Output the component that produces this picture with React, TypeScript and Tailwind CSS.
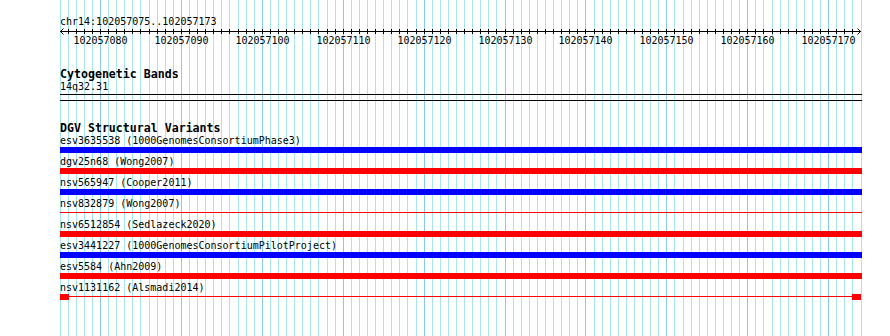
const START = 102057075;
const BASES = 99;
const LEFT = 60;
const TRACK_W = 801;

// pixel column of the gridline at base offset i
const bx = (i: number) => Math.floor(LEFT + (i * TRACK_W) / BASES);

type Variant = {
  name: string;
  study: string;
  color: 'blue' | 'red';
  style: 'bar' | 'line' | 'ends';
};

const variants: Variant[] = [
  { name: 'esv3635538', study: '1000GenomesConsortiumPhase3', color: 'blue', style: 'bar' },
  { name: 'dgv25n68', study: 'Wong2007', color: 'red', style: 'bar' },
  { name: 'nsv565947', study: 'Cooper2011', color: 'blue', style: 'bar' },
  { name: 'nsv832879', study: 'Wong2007', color: 'red', style: 'line' },
  { name: 'nsv6512854', study: 'Sedlazeck2020', color: 'red', style: 'bar' },
  { name: 'esv3441227', study: '1000GenomesConsortiumPilotProject', color: 'blue', style: 'bar' },
  { name: 'esv5584', study: 'Ahn2009', color: 'red', style: 'bar' },
  { name: 'nsv1131162', study: 'Alsmadi2014', color: 'red', style: 'ends' },
];

function Grid() {
  return (
    <svg className="absolute left-0 top-0" width={890} height={336} shapeRendering="crispEdges">
      {Array.from({ length: BASES + 1 }, (_, i) => (
        <rect
          key={i}
          x={bx(i)}
          y={0}
          width={1}
          height={336}
          fill={i % 10 === 5 ? '#87cbef' : '#a8e6ef'}
        />
      ))}
    </svg>
  );
}

function Ruler() {
  const ticks = Array.from({ length: BASES - 1 }, (_, k) => k + 1);
  const labels = Array.from({ length: 10 }, (_, k) => 5 + k * 10);
  return (
    <svg width={803} height={18} className="block">
      <g shapeRendering="crispEdges">
        <rect x={0} y={3} width={801} height={1} fill="#000" />
        {ticks.map((i) => (
          <rect key={i} x={bx(i) - LEFT} y={1} width={1} height={5} fill="#000" />
        ))}
      </g>
      {/* arrowheads */}
      <polyline points="3.5,0.5 0.5,3.5 3.5,6.5" fill="none" stroke="#000" strokeWidth={1} />
      <polyline points="797.5,0.5 800.5,3.5 797.5,6.5" fill="none" stroke="#000" strokeWidth={1} />
      {labels.map((i) => (
        <text
          key={i}
          x={bx(i) - LEFT + 0.5}
          y={15.5}
          textAnchor="middle"
          fontSize={10}
          fontFamily="'DejaVu Sans Mono', monospace"
          fill="#000"
        >
          {START + i}
        </text>
      ))}
    </svg>
  );
}

function VariantGlyph({ v }: { v: Variant }) {
  const bg = v.color === 'blue' ? 'bg-[#0000ff]' : 'bg-[#ff0000]';
  if (v.style === 'bar') {
    return <div className={`h-[6px] w-[802px] ${bg}`} />;
  }
  if (v.style === 'line') {
    return (
      <div className="h-[6px] w-[802px]">
        <div className={`mt-[2px] h-[1px] ${bg}`} />
      </div>
    );
  }
  return (
    <div className="flex h-[6px] w-[802px] items-start pr-[1px]">
      <div className={`h-[6px] w-[9px] ${bg}`} />
      <div className={`mt-[2px] h-[1px] flex-1 ${bg}`} />
      <div className={`h-[6px] w-[9px] ${bg}`} />
    </div>
  );
}

export default function App() {
  return (
    <div className="relative h-[336px] w-[890px] overflow-hidden bg-white font-['DejaVu_Sans_Mono',monospace] text-[10px] text-black">
      <Grid />

      <div className="relative flex flex-col pl-[60px] pt-[16px]">
        {/* ruler */}
        <div className="h-[12px] leading-[11px] whitespace-pre">chr14:102057075..102057173</div>
        <Ruler />

        {/* cytogenetic bands */}
        <div className="mt-[22px] h-[13px] text-[11.6px] font-bold leading-[12px] whitespace-pre">
          Cytogenetic Bands
        </div>
        <div className="h-[12px] leading-[11px] whitespace-pre">14q32.31</div>
        <div className="mt-[1px] h-[1px] w-[802px] bg-black" />
        <div className="mt-[5px] h-[1px] w-[802px] bg-black" />

        {/* DGV structural variants */}
        <div className="mt-[21px] h-[13px] text-[11.6px] font-bold leading-[12px] whitespace-pre">
          DGV Structural Variants
        </div>
        <div className="flex flex-col gap-[3px]">
          {variants.map((v) => (
            <div key={v.name} className="flex flex-col">
              <div className="h-[12px] leading-[11px] whitespace-pre">
                {v.name} ({v.study})
              </div>
              <VariantGlyph v={v} />
            </div>
          ))}
        </div>
      </div>
    </div>
  );
}
